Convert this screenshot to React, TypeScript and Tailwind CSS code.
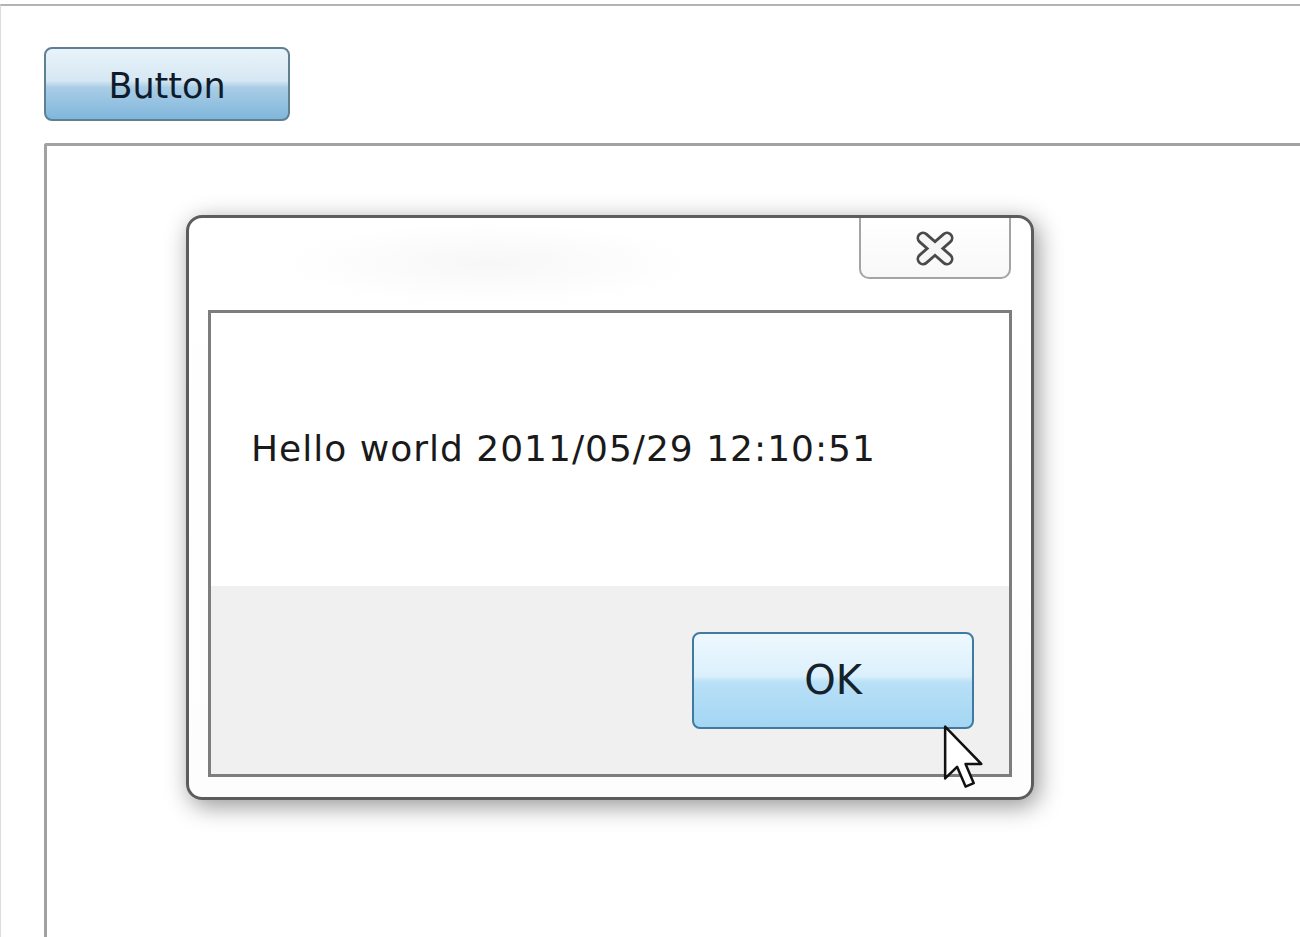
import React from "react";

export default function App() {
  return (
    <div className="w-[1300px] h-[937px] overflow-hidden bg-white font-['DejaVu_Sans',sans-serif]">
      <div className="mt-[4px] h-[933px] border-t-[2px] border-l-[1px] border-t-[#b4b4b4] border-l-[#dcdcdc] pt-[41px] pl-[43px] flex flex-col">
        <button className="w-[246px] h-[74px] rounded-[8px] border-[2px] border-[#5f7f92] bg-[linear-gradient(to_bottom,#e9f3f9_0%,#d6e8f4_45%,#a9cde6_55%,#80b6dc_100%)] flex items-center justify-center text-[35px] text-[#0f1b2a] pt-[5px]">
          Button
        </button>
        <div className="mt-[22px] flex-1 border-t-[3px] border-l-[3px] border-[#a2a2a2] rounded-tl-[3px] pl-[139px] pt-[69px]">
          <div className="w-[848px] h-[585px] rounded-[16px] border-[3px] border-[#5c5c5c] bg-[linear-gradient(to_bottom,#ffffff,#fdfdfd)] shadow-[4px_6px_24px_rgba(0,0,0,0.42)] flex flex-col">
            <div className="h-[92px] flex justify-end pr-[20px] bg-[radial-gradient(ellipse_200px_40px_at_300px_45px,#f7f7f7,transparent)]">
              <div className="w-[152px] h-[61px] border-[2px] border-t-0 border-[#a4a4a4] rounded-b-[10px] bg-[linear-gradient(to_bottom,#ffffff,#f8f8f8)] flex items-center justify-center pt-[2px]">
                <svg width="42" height="37" viewBox="0 0 42 37">
                  <g strokeLinecap="round" strokeLinejoin="round">
                    <path d="M9 8 L33 29 M33 8 L9 29" stroke="#4a4a4a" strokeWidth="13" fill="none" />
                    <path d="M9 8 L33 29 M33 8 L9 29" stroke="#f6f6f6" strokeWidth="7.5" fill="none" />
                  </g>
                </svg>
              </div>
            </div>
            <div className="mx-[19px] mb-[20px] flex-1 border-[3px] border-[#7d7d7d] flex flex-col">
              <div className="h-[273px] bg-white flex items-center pl-[40px] pb-[2px]">
                <span className="text-[36px] text-[#1a1a1a] tracking-[1px]">Hello world 2011/05/29 12:10:51</span>
              </div>
              <div className="flex-1 bg-[#f0f0f0] flex items-center justify-end pr-[35px]">
                <div className="relative">
                  <button className="w-[282px] h-[97px] rounded-[8px] border-[2px] border-[#3f7ba1] bg-[linear-gradient(to_bottom,#eef8fe_0%,#dbf0fc_45%,#b9e0f7_52%,#a3d6f3_100%)] flex items-center justify-center text-[40px] text-[#15212b]">
                    OK
                  </button>
                  <svg className="absolute left-[251px] top-[93px]" width="42" height="66" viewBox="0 0 13 21">
                    <path d="M0.5 0.5 L0.5 17 L4.3 13.3 L7 19.6 L9.6 18.5 L7 12.4 L12 12.4 Z" fill="#ffffff" stroke="#111" strokeWidth="0.8" strokeLinejoin="round" />
                  </svg>
                </div>
              </div>
            </div>
          </div>
        </div>
      </div>
    </div>
  );
}
